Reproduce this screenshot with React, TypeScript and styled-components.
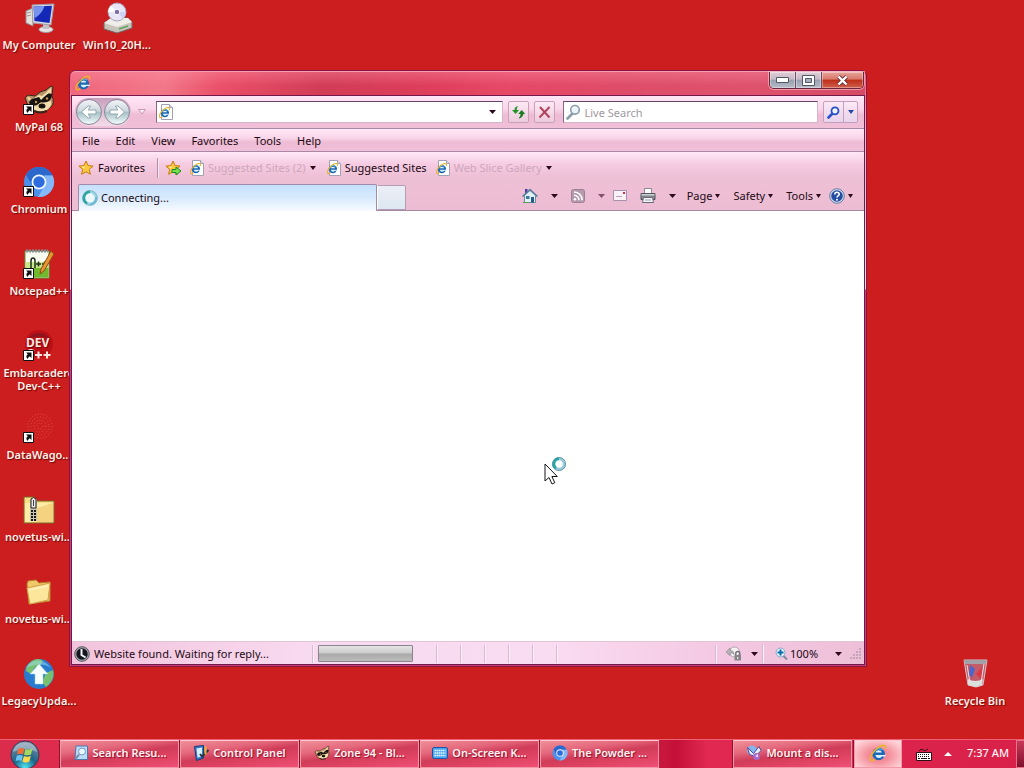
import { FC, ReactNode } from 'react';
import styled, { createGlobalStyle, css } from 'styled-components';

const GlobalStyle = createGlobalStyle`
  * {
    box-sizing: border-box;
  }

  body {
    margin: 0;
    font-family: 'Noto Sans', 'Open Sans', sans-serif;
    font-size: 11px;
    line-height: 14px;
    color: #1c0a14;
  }

  button, input {
    font: inherit;
    color: inherit;
  }

  button {
    margin: 0;
    padding: 0;
    border: 0;
    background: none;
  }

  svg {
    display: block;
    flex: none;
  }
`;

const Screen = styled.div`
  display: flex;
  flex-direction: column;
  min-height: 100vh;
  overflow: hidden;
  background: #cc1e1e;
`;

/* desktop */

const Desktop = styled.main`
  position: relative;
  flex: 1;
  display: flex;
  justify-content: space-between;
`;

const Shortcuts = styled.div`
  display: grid;
  grid-template-rows: repeat(9, 82px);
  grid-auto-columns: 78px;
  grid-auto-flow: column;
`;

const BinArea = styled.div`
  display: flex;
  align-items: flex-end;
  width: 98px;
  padding-bottom: 1px;
`;

const ShortcutButton = styled.button`
  display: flex;
  flex-direction: column;
  align-items: center;
  gap: 4px;
  width: 100%;
  height: 82px;
  padding-top: 2px;
  font-weight: 600;
  line-height: 13px;
  color: #fff0ea;
  text-shadow: 1px 1px 1px rgba(90, 0, 0, 0.8);
  white-space: pre;
`;

/* browser window */

const WindowFrame = styled.section`
  position: absolute;
  top: 70px;
  right: 157px;
  bottom: 72px;
  left: 69px;
  display: flex;
  flex-direction: column;
  padding: 0 1px 1px;
  border: 1px solid #8c1440;
  border-radius: 6px 6px 0 0;
  background: linear-gradient(#e8567a 0, #f4b8d0 60px, #fbe0ee 218px, #c0447c 219px);
`;

const TitleBar = styled.header`
  display: flex;
  justify-content: space-between;
  height: 24px;
  padding-left: 4px;
  border-radius: 5px 5px 0 0;
  border-top: 1px solid #f4a0b0;
  background:
    linear-gradient(rgba(255, 150, 170, 0.35), rgba(255, 120, 150, 0) 60%),
    linear-gradient(100deg, #f0667c 0, #f27888 12%, #ea5068 19%, #d23c56 32%, #de3e5a 45%, #e64866 55%, #de4c68 70%, #de526e 86%, #d44a64 100%);
`;

const TitleIcon = styled.span`
  padding-top: 3px;
`;

const Caption = styled.div`
  display: flex;
  height: 17px;
  margin-right: 1px;
  border: 1px solid #6c2438;
  border-top: 0;
  border-radius: 0 0 5px 5px;
  overflow: hidden;
  box-shadow: 0 0 0 1px rgba(255, 200, 210, 0.6);
`;

const CaptionButton = styled.button<{ $close?: boolean }>`
  display: flex;
  align-items: center;
  justify-content: center;
  width: ${({ $close }) => ($close ? '41px' : '26px')};
  border-right: ${({ $close }) => ($close ? '0' : '1px solid #6c4c60')};
  background: ${({ $close }) =>
    $close
      ? 'linear-gradient(#e8a49a 0, #d8786a 45%, #bc2e18 50%, #d0604c 100%)'
      : 'linear-gradient(#e0ccd6 0, #c8b8c6 45%, #98a0b0 50%, #b8bcc8 100%)'};
  box-shadow: inset 0 0 0 1px rgba(255, 255, 255, 0.35);
`;

const WindowBody = styled.div`
  display: flex;
  flex: 1;
  flex-direction: column;
  border: 1px solid #74184c;
  background: #fff;
`;

const pinkBar = css`
  background: linear-gradient(#ffe6f6 0, #fad6ea 40%, #eebcd4 60%, #f0c0d8 100%);
`;

const NavBar = styled.div`
  display: flex;
  align-items: center;
  height: 33px;
  padding: 0 6px 0 3px;
  border-bottom: 1px solid #a888a4;
  ${pinkBar}
`;

const TravelButtons = styled.div`
  display: flex;
  gap: 2px;
  padding: 1px;
  margin-right: 4px;
  border-radius: 14px;
  background: linear-gradient(#c8a0bc, #f4dcea);
`;

const RoundButton = styled.button`
  display: flex;
  align-items: center;
  justify-content: center;
  width: 26px;
  height: 26px;
  border: 1px solid #8c8498;
  border-radius: 50%;
  background: linear-gradient(#f4f4f8 0, #ccd8de 45%, #a8c0c6 52%, #f0fcfc 100%);
`;

const ArrowButton = styled.button`
  display: flex;
  align-items: center;
  justify-content: center;
  width: 14px;
  height: 18px;
`;

const Field = styled.div`
  display: flex;
  align-items: center;
  height: 22px;
  padding: 0 2px;
  border: 1px solid #d8b4cc;
  border-top-color: #644468;
  border-left-color: #846884;
  background: #fff;
`;

const AddressField = styled(Field)`
  flex: 348;
  margin-left: 7px;
`;

const SearchField = styled(Field)`
  flex: 255;
  margin: 0 5px 0 8px;
`;

const TextInput = styled.input`
  flex: 1;
  min-width: 0;
  height: 18px;
  padding: 0 4px;
  border: 0;
  outline: 0;
  background: none;

  &::placeholder {
    color: #a098a0;
    opacity: 1;
  }
`;

const SquareButton = styled.button`
  display: flex;
  align-items: center;
  justify-content: center;
  width: 21px;
  height: 22px;
  margin-left: 5px;
  border: 1px solid #c8a0bc;
  border-radius: 2px;
  background: linear-gradient(#fdeaf4 0, #f6dae8 50%, #eccadc 100%);
`;

const SearchSplit = styled.div`
  display: flex;
  height: 22px;
  border: 1px solid #c4a0c0;
  border-radius: 2px;
  background: linear-gradient(#fdeaf6 0, #f2dcee 50%, #e8d4ec 100%);

  button {
    display: flex;
    align-items: center;
    justify-content: center;
    width: 13px;
  }

  button:first-child {
    width: 20px;
    border-right: 1px solid #c4a0c0;
  }
`;

const MenuBar = styled.nav`
  display: flex;
  height: 23px;
  padding: 2px 2px 0;
  border-bottom: 1px solid #a888a4;
  ${pinkBar}
`;

const MenuItem = styled.button`
  padding: 0 8px;
`;

const Toolbars = styled.div`
  background: linear-gradient(#ffe8f8 0, #f6cce2 12px, #eec0d6 24px, #ecbcd2 100%);
`;

const FavoritesBar = styled.div`
  display: flex;
  align-items: center;
  height: 32px;
  padding-left: 6px;
`;

const FavoriteLink = styled.button<{ $faded?: boolean }>`
  display: flex;
  align-items: center;
  gap: 4px;
  margin-right: 9px;
  white-space: nowrap;
  color: ${({ $faded }) => ($faded ? '#cda6bc' : 'inherit')};
`;

const FavoritesButton = styled(FavoriteLink)`
  margin-right: 12px;
`;

const FavoritesDivider = styled.span`
  width: 1px;
  height: 20px;
  margin-right: 7px;
  background: #b48ca8;
  box-shadow: 1px 0 0 #ffe8f4;
`;

const SiteLink = styled(FavoriteLink)`
  margin-right: 11px;
`;

const TabRow = styled.div`
  display: flex;
  align-items: flex-end;
  height: 27px;
  padding-left: 6px;
  border-bottom: 1px solid #a888a4;
`;

const Tab = styled.button`
  display: flex;
  align-items: center;
  gap: 3px;
  width: 299px;
  height: 27px;
  margin-bottom: -1px;
  padding: 0 3px;
  border: 1px solid #a08ca8;
  border-bottom: 0;
  border-radius: 2px 2px 0 0;
  background: linear-gradient(#c4e0fc 0, #d8eafc 50%, #f6fbff 100%);
`;

const NewTab = styled.button`
  width: 29px;
  height: 25px;
  border: 1px solid #b49cb4;
  border-left-color: #ffffff;
  border-radius: 0 2px 0 0;
  background: linear-gradient(#eceef6, #dce8f2);
`;

const CommandBar = styled.div`
  display: flex;
  align-items: center;
  height: 27px;
  margin-left: auto;
  padding: 0 11px 2px 0;
`;

const Command = styled.button<{ $gap?: number }>`
  display: flex;
  align-items: center;
  gap: 3px;
  margin-left: ${({ $gap = 13 }) => $gap}px;
`;

const Page = styled.div`
  flex: 1;
  background: #fff;
`;

const StatusBar = styled.footer`
  display: flex;
  align-items: center;
  height: 23px;
  padding: 1px 0 0 2px;
  border-top: 1px solid #e0c4d8;
  background: linear-gradient(90deg, #f2c4dc 0, #f8daf0 30%, #fadcf2 60%, #f4c8e2 82%, #eec0d8 100%);
`;

const StatusText = styled.span`
  width: 222px;
  padding-left: 4px;
  white-space: nowrap;
`;

const Pane = styled.span<{ $width: number }>`
  display: flex;
  align-items: center;
  justify-content: space-between;
  width: ${({ $width }) => $width}px;
  height: 18px;
  border-left: 1px solid #dcb8d0;
  box-shadow: inset 1px 0 0 #fff0fa;
`;

const ProgressPane = styled(Pane)`
  padding-left: 5px;
`;

const SecurityPane = styled(Pane)`
  margin-left: auto;
  padding: 0 4px 0 10px;
`;

const ZoomPane = styled(Pane)`
  padding: 0 2px 0 12px;
`;

const ZoomButton = styled.button`
  display: flex;
  align-items: center;
  gap: 2px;
  margin-right: 8px;
`;

const Progress = styled.div`
  width: 95px;
  height: 17px;
  border: 1px solid #8c848c;
  border-radius: 1px;
  background: linear-gradient(#e4e4e4 0, #cccccc 48%, #a8a8a8 52%, #bcbcbc 100%);
`;

const Pointer = styled.div`
  position: absolute;
  top: 456px;
  left: 544px;
`;

/* taskbar */

const Taskbar = styled.footer`
  display: flex;
  height: 29px;
  border-top: 1px solid #f06078;
  background: linear-gradient(90deg, #dc2c4c 0, #e02c50 30%, #d02444 62%, #c41038 66%, #e02850 69%, #d82048 100%);
`;

const StartButton = styled.button`
  display: flex;
  justify-content: center;
  width: 50px;
  margin-right: 10px;
`;

const TaskButton = styled.button<{ $active?: boolean }>`
  display: flex;
  align-items: center;
  justify-content: center;
  gap: 4px;
  width: ${({ $active }) => ($active ? '48px' : '119px')};
  margin-right: 1px;
  padding-bottom: 2px;
  border: 1px solid #f498a8;
  border-top-color: #ffc8d0;
  font-weight: 600;
  color: #fff4f4;
  white-space: nowrap;
  text-shadow: 1px 1px 1px #90102c;
  box-shadow: -1px 0 0 #901030;
  background: ${({ $active }) =>
    $active
      ? 'radial-gradient(ellipse at 50% 55%, #f07890 0, #f4909c 35%, #ffd8dc 90%)'
      : 'linear-gradient(172deg, #f09098 0, #e4687c 30%, #d03c58 50%, #e24464 75%, #ee5078 100%)'};
`;

const Tray = styled.div`
  display: flex;
  align-items: center;
  margin-left: auto;
`;

const TrayTaskButton = styled(TaskButton)`
  align-self: stretch;
  margin-right: 2px;
`;

const TrayButton = styled.button`
  display: flex;
  align-items: center;
  height: 28px;
  margin-left: 12px;
`;

const Clock = styled.time`
  width: 41px;
  margin: 0 8px 0 15px;
  padding-bottom: 2px;
  color: #fff4f4;
  font-weight: 500;
  white-space: nowrap;
`;

const ShowDesktop = styled.button`
  align-self: stretch;
  width: 8px;
  border: 1px solid #e87088;
  border-right: 0;
  background: linear-gradient(#c83858, #80102c);
`;

/* drawings */

const Caret: FC<{ color?: string; width?: number }> = ({ color = '#2c0a1c', width = 7 }) => (
  <svg width={width} height="4" viewBox="0 0 8 4" preserveAspectRatio="none">
    <path d="M0 0h8L4 4z" fill={color} />
  </svg>
);

const IeMark: FC = () => (
  <g>
    <circle cx="8.500" cy="8.800" r="5.600" fill="#1c68b4" />
    <path d="M5.700 7.500a2.900 2.400 0 0 1 5.700 0z" fill="#dcf2fc" />
    <path d="M5.700 9.800h9v1.200h-3.200q-1 1.400-2.900 1.400-2.300 0-2.900-2.600z" fill="#dcf2fc" />
    <path d="M4 7.500a5 5 0 0 1 8-2.200" fill="none" stroke="#58bce8" />
    <path
      d="M14.500 4.500C15.500 1 12.500.2 8.400 3 4 6 .2 11.500 1.200 14c.6 1.400 2.600.6 4-.4"
      fill="none"
      stroke="#e8b42c"
      strokeWidth="1.500"
    />
  </g>
);

const IeIcon: FC<{ size?: number }> = ({ size = 16 }) => (
  <svg width={size} height={size} viewBox="0 0 16 16">
    <IeMark />
  </svg>
);

const IePageIcon: FC = () => (
  <svg width="14" height="16" viewBox="0 0 14 16">
    <path d="M2.500.5h8l3 3v12h-11z" fill="#fff" stroke="#a4a0b4" />
    <path d="M10.500.5v3h3" fill="#e0e0ec" stroke="#a4a0b4" />
    <g transform="translate(-.5 2.500) scale(.75)">
      <IeMark />
    </g>
  </svg>
);

const Star: FC<{ add?: boolean }> = ({ add }) => (
  <svg width="16" height="16" viewBox="0 0 16 16">
    <path
      d="M8 1l2.100 4.600 5 .5-3.800 3.300 1.100 4.900L8 11.800l-4.400 2.500 1.100-4.900L.9 6.100l5-.5z"
      fill="#fcc840"
      stroke="#c47c14"
    />
    <path d="M8 3L6.700 6.400l-3 .4 2.300 2" fill="#fff2a8" />
    {add && <path d="M7 9.500h4v-2.500l5 4-5 4v-2.500H7z" fill="#78e050" stroke="#168c24" />}
  </svg>
);

const Spinner: FC = () => (
  <svg width="16" height="16" viewBox="0 0 16 16">
    <circle cx="8" cy="8" r="6.200" fill="#eef8fc" stroke="#9cd4e4" strokeWidth="3" />
    <path d="M8 1.800A6.200 6.200 0 0 0 5 13.400" fill="none" stroke="#24a49c" strokeWidth="2.500" />
    <path d="M8 14.200a6.200 6.200 0 0 0 6-7" fill="none" stroke="#60b8d8" strokeWidth="1.500" />
    <circle cx="8" cy="8" r="7.300" fill="none" stroke="#6ca4b4" strokeWidth=".6" />
  </svg>
);

const TravelArrow: FC<{ forward?: boolean }> = ({ forward }) => (
  <svg width="18" height="16" viewBox="0 0 18 16">
    <path
      d="M1.500 8L8 2h2.500L8.200 6H16v4H8.200l2.300 4H8z"
      fill="#fff"
      stroke="#90a8b0"
      transform={forward ? 'rotate(180 9 8)' : undefined}
    />
  </svg>
);

const RefreshIcon: FC = () => (
  <svg width="15" height="14" viewBox="0 0 15 14">
    <path d="M7 1C4.500 1.500 3.500 3 3.500 5H1l3.600 4L8 5H5.800c0-1.500.2-2.600 1.200-4z" fill="#249428" />
    <path d="M8 13c2.500-.5 3.800-2 3.800-4" fill="none" stroke="#187c20" strokeWidth="1" />
    <path d="M8 13c2.500-.5 4-2 4-4h2.200L10.700 5 7.200 9h2.300c0 1.500-.3 2.800-1.500 4z" fill="#187c20" />
  </svg>
);

const StopIcon: FC = () => (
  <svg width="13" height="13" viewBox="0 0 13 13">
    <path d="M2 1l9.500 10.500M11.500 1L1.500 11.500" stroke="#b04460" strokeWidth="2" />
  </svg>
);

const Lens: FC<{ color: string; glass?: string }> = ({ color, glass = '#eaf4fa' }) => (
  <svg width="15" height="16" viewBox="0 0 15 16">
    <path d="M6.500 9.500L1.500 14.500" stroke={color} strokeWidth="2.600" strokeLinecap="round" />
    <circle cx="9" cy="5.800" r="4.300" fill={glass} stroke={color} strokeWidth="1.600" />
    <path d="M6.800 5.200a2.400 2.400 0 0 1 2.600-2" fill="none" stroke="#fff" />
  </svg>
);

const SearchLens: FC = () => (
  <svg width="13" height="13" viewBox="0 0 13 13">
    <path d="M5.500 7.500L1.500 11.500" stroke="#2850c8" strokeWidth="2.600" strokeLinecap="round" />
    <circle cx="8" cy="4.800" r="3.500" fill="#f0f4fc" stroke="#2850c8" strokeWidth="1.800" />
  </svg>
);

const HomeIcon: FC = () => (
  <svg width="16" height="16" viewBox="0 0 16 16">
    <path d="M3 1h2.500v4H3z" fill="#5038a4" />
    <path d="M2.500 7.500L8 2.500l5.500 5v7h-11z" fill="#e0f0f6" stroke="#6c8ca4" />
    <path d="M.5 8.500L8 1.500l7.500 7" fill="none" stroke="#587c9c" strokeWidth="1.500" />
    <path d="M9 9h3v5.500H9z" fill="#245c84" />
    <path d="M4 8h3.500v3H4z" fill="#407898" />
    <path d="M1 14.500h6" stroke="#50a050" />
  </svg>
);

const FeedIcon: FC = () => (
  <svg width="14" height="14" viewBox="0 0 14 14">
    <rect x=".5" y=".5" width="13" height="13" rx="2" fill="#b49aac" stroke="#9c8094" />
    <circle cx="4" cy="10.200" r="1.300" fill="#fff" />
    <path d="M3 6.200a5 5 0 0 1 5 5M3 3a8.200 8.200 0 0 1 8.200 8.200" fill="none" stroke="#fff" strokeWidth="1.500" />
  </svg>
);

const MailIcon: FC = () => (
  <svg width="14" height="11" viewBox="0 0 14 11">
    <path d="M.5.5h13v10H.5z" fill="#fbf2f8" stroke="#a890ac" />
    <path d="M10 2h2v2h-2z" fill="#c83048" />
    <path d="M3 6.500h6" stroke="#b4a4b8" />
  </svg>
);

const PrinterIcon: FC = () => (
  <svg width="16" height="15" viewBox="0 0 16 15">
    <path d="M4.500.5h7v6h-7z" fill="#fff" stroke="#888894" />
    <path d="M1 5.500h14v6H1z" fill="#84888c" stroke="#50545c" />
    <path d="M1.500 6h13v1.500h-13z" fill="#c8d0d0" />
    <path d="M3.500 9.500h9l1 5h-11z" fill="#f4f4f8" stroke="#686c78" />
    <path d="M5 12h6" stroke="#a4a4b0" />
  </svg>
);

const HelpIcon: FC = () => (
  <svg width="16" height="16" viewBox="0 0 16 16">
    <circle cx="8" cy="8" r="7.300" fill="#d4dcec" stroke="#687ca4" />
    <circle cx="8" cy="8" r="5.800" fill="#244ea4" />
    <path d="M5.800 6.400C5.800 3.600 10.300 3.700 10.300 6.200 10.300 7.700 8 7.700 8 9.600" fill="none" stroke="#fff" strokeWidth="1.600" />
    <circle cx="8" cy="11.800" r="1" fill="#fff" />
  </svg>
);

const WaitIcon: FC = () => (
  <svg width="16" height="16" viewBox="0 0 16 16">
    <circle cx="8" cy="8" r="7.300" fill="#a4a4ac" stroke="#58585f" />
    <circle cx="8" cy="8" r="5.700" fill="#16161e" />
    <path d="M7.500 3v6l4 2.500" fill="none" stroke="#f4f4f8" strokeWidth="2" />
  </svg>
);

const ProtectedIcon: FC = () => (
  <svg width="16" height="15" viewBox="0 0 16 15">
    <circle cx="8.500" cy="6" r="5" fill="#f6f2f4" stroke="#b0a4ac" />
    <path d="M0 6l4-4v2.500c3 0 4 1.500 4 4C7 7 6 7 4 7v2.500z" fill="#b8b4b8" stroke="#908890" strokeWidth=".7" />
    <path d="M9.800 9V7.500a2 2 0 0 1 4 0V9" fill="none" stroke="#706c74" strokeWidth="1.400" />
    <path d="M8.500 9h6.500v5.500H8.500z" fill="#86848a" />
    <path d="M11.200 11h1v2h-1z" fill="#f4f0f4" />
  </svg>
);

const ZoomIcon: FC = () => (
  <svg width="13" height="14" viewBox="0 0 13 14">
    <path d="M8 8.500l4 4" stroke="#7c889c" strokeWidth="2" />
    <circle cx="5.500" cy="5.500" r="4.500" fill="#e4f4fc" stroke="#84a4c4" />
    <path d="M5.500 2.500v6M2.500 5.500h6" stroke="#0c6cac" strokeWidth="2" />
  </svg>
);

const Grip: FC = () => (
  <svg width="12" height="12" viewBox="0 0 12 12">
    <path
      d="M9 0h2v2H9zM6 3h2v2H6zM9 3h2v2H9zM3 6h2v2H3zM6 6h2v2H6zM9 6h2v2H9zM0 9h2v2H0zM3 9h2v2H3zM6 9h2v2H6zM9 9h2v2H9z"
      fill="#c4a4bc"
    />
  </svg>
);

const PointerIcon: FC = () => (
  <svg width="24" height="30" viewBox="0 0 24 30">
    <path d="M1 8v17l4-3.500 3 6.500 2.800-1.300-2.900-6.200h5.400z" fill="#fff" stroke="#141418" />
    <circle cx="15" cy="8" r="5.300" fill="none" stroke="#98c8d8" strokeWidth="3" />
    <path d="M15 2.700A5.300 5.300 0 0 0 12 12.300" fill="none" stroke="#28a8a4" strokeWidth="2.600" />
    <circle cx="15" cy="8" r="6.600" fill="none" stroke="#4c8498" strokeWidth=".7" />
  </svg>
);

const LinkBadge: FC = () => (
  <g>
    <path d="M.5 20.500h10v10H.5z" fill="#fff" stroke="#101010" />
    <path d="M3 22.500h5.500V28L6.700 26.200C5.500 27 5 28 4.800 29 2.800 27.500 3 25.700 4.800 24.300z" fill="#101010" />
  </g>
);

const Picture: FC<{ size?: number; linked?: boolean; children: ReactNode }> = ({ size = 32, linked, children }) => (
  <svg width={size} height={size} viewBox="0 0 32 32">
    {children}
    {linked && <LinkBadge />}
  </svg>
);

const computerArt = (
  <g>
    <path d="M3 9l7-3v18l-7-3z" fill="#e4e0dc" stroke="#948c8c" />
    <path d="M4 11l4-1M4 14l4-1" stroke="#a09898" />
    <ellipse cx="23" cy="27.500" rx="7" ry="3" fill="#e8e4e4" stroke="#a09ca4" />
    <path d="M20 21h6v6h-6z" fill="#c4c0c8" />
    <path d="M9 3l22-1-3 21-18-2z" fill="#d8d8e0" stroke="#a09ca8" />
    <path d="M10.500 4.500l18.500-.8L26.500 21 11.500 19z" fill="#1428b8" />
    <path d="M10.500 4.500l11-.5c-2 6-6 10-10 12z" fill="#7894ec" />
  </g>
);

const driveArt = (
  <g>
    <path d="M3 21l7-5h17l4 4v6L16 31 3 27z" fill="#c8c4bc" stroke="#706868" />
    <path d="M3 21l13 4 15-5-4-4H10z" fill="#f0eee8" />
    <path d="M18 27l9-3" stroke="#60a460" strokeWidth="1.500" />
    <circle cx="16" cy="10" r="9" fill="#e8e6f6" stroke="#a8a4bc" />
    <path d="M16 10L10 3.500A9 9 0 0 0 7 10z" fill="#fff" />
    <path d="M16 10l6 6.500A9 9 0 0 0 25 10z" fill="#ccd0f4" />
    <circle cx="16" cy="10" r="2.800" fill="#7c6ca8" stroke="#fff" />
  </g>
);

const raccoonArt = (
  <g>
    <path d="M2 14l3-3 7 1q5-5 11-6l5-4 2 1-1 9q3 7-1 11-5 5-12 5-9 0-12-9z" fill="#b89468" stroke="#38241c" />
    <path d="M24 7l4-3v6zM4 13l4 1-2 3z" fill="#f4d8a8" />
    <path d="M6 18q6-7 13-5 5-5 10-3 0 6-5 8-3 1-6 0-5 5-11 3z" fill="#181414" />
    <path d="M9 15l7-4 3 1 6-5 2 1-6 5-3 3-2-3z" fill="#f2dfae" />
    <path d="M8 23q5 0 9-4 5 0 11-2 1 6-4 9-9 4-16-3z" fill="#f2dfae" />
    <ellipse cx="19" cy="22" rx="3.500" ry="2.500" fill="#181414" />
    <circle cx="13" cy="18" r="1.200" fill="#c89858" />
    <circle cx="24" cy="14.500" r="1.200" fill="#c89858" />
    <path d="M11 27q6 3 13 0" fill="none" stroke="#38241c" strokeWidth="2" />
  </g>
);

const chromiumArt = (
  <g>
    <circle cx="16" cy="16" r="15" fill="#4c90ec" />
    <path d="M16 1a15 15 0 0 1 13.600 8.500H16L9.600 20 3 9A15 15 0 0 1 16 1z" fill="#2c68cc" />
    <path d="M29.600 9.500A15 15 0 0 1 15 31l7-12c2-3 1-7-1-9.500z" fill="#84b8f8" />
    <circle cx="16" cy="16" r="7.500" fill="#f0f6ff" />
    <circle cx="16" cy="16" r="5.700" fill="#2c6cdc" />
  </g>
);

const notepadArt = (
  <g>
    <path d="M2 3h24v27H2z" fill="#f8fcf0" stroke="#609040" />
    <path d="M2.500 19h23v10.500h-23z" fill="#70b82c" />
    <path d="M2.500 14h23v6h-23z" fill="#c8e888" />
    <path d="M3 3h22" stroke="#8c8c98" strokeWidth="3" strokeDasharray="2 1" />
    <path d="M8 20V13q0-3 2-3t2 3v7M13 16h5m-2.500-2.500v5M19 16h5m-2.500-2.500v5" fill="none" stroke="#202c20" strokeWidth="1.500" />
    <path d="M28 3l3 3-10 17-4 3 1-5z" fill="#e89430" stroke="#8c4c18" />
  </g>
);

const devArt = (
  <g>
    <circle cx="16" cy="14" r="14" fill="#bc1018" />
    <path d="M5 9a13 13 0 0 1 22 0q-11-5-22 0z" fill="#8c141c" />
    <text x="3" y="17" fill="#ffe8e0" fontFamily="'Noto Sans', sans-serif" fontSize="12" fontWeight="700">
      DEV
    </text>
    <path
      d="M11 21q-7-3-7 4M12 25h7m-3.500-3.500v7M20.500 25h7M24 21.500v7"
      fill="none"
      stroke="#ffe8e0"
      strokeWidth="2"
    />
  </g>
);

const wagonArt = (
  <g fill="none" stroke="#e45450" strokeWidth="1" strokeDasharray="1 2">
    <circle cx="17" cy="14" r="12" />
    <circle cx="17" cy="14" r="9" />
    <circle cx="17" cy="14" r="6" />
    <circle cx="17" cy="14" r="3" />
  </g>
);

const zipArt = (
  <g>
    <path d="M1 3h10l3 4h17v22H1z" fill="#f6dc84" stroke="#7c6428" />
    <path d="M2 9h28v19H2z" fill="#fbeca8" />
    <path d="M14 14L30 9v19H14z" fill="#f4d280" />
    <path d="M7 5h7v22H7z" fill="#c8c4b0" />
    <path d="M8 17h5M8 20h5M8 23h5M8 26h5" stroke="#181818" strokeWidth="1.800" strokeDasharray="2 1" />
    <path d="M8 5q2.500-3 5 0v9H8z" fill="#e8e8e8" stroke="#202020" />
    <path d="M10.500 6v6" stroke="#404040" />
  </g>
);

const folderArt = (
  <g>
    <path d="M4 8l1-3 8-1 3 3 11-1v19L6 28z" fill="#f0c868" stroke="#b88030" />
    <path d="M4 12l23-5-2 17L7 28z" fill="#fce69c" stroke="#d0a048" />
    <path d="M6 14l19-4" stroke="#fff8d0" />
  </g>
);

const updateArt = (
  <g>
    <circle cx="16" cy="16" r="15" fill="#287cd0" />
    <path d="M9 3c5-3 9-2 11 0l-3 5-5 1-4 7-5-3c0-4 3-8 6-10zM23 15l7-3c2 8-2 13-7 17l-4-5z" fill="#78c070" />
    <path d="M3 10c4-8 16-12 25 0-8-5-17-4-25 0z" fill="#a0dcf4" opacity=".5" />
    <path d="M16 6l9 10h-5v10h-8V16H7z" fill="#f6feff" stroke="#9cd0e0" strokeWidth=".5" />
  </g>
);

const binArt = (
  <g>
    <path d="M5 2h23l-4 25-7 2-8-2z" fill="#c45c68" stroke="#d4c8d0" />
    <path d="M5 2h23l-1 4H6z" fill="#a4a0a8" />
    <path d="M11 7l5 4-3 9-3-4z" fill="#4c64cc" />
    <path d="M23 9l-6 7 5 5z" fill="#dc3848" />
    <path d="M9 21q7 4 15 0l-1 6-6 2-8-2z" fill="#dce0dc" />
    <path d="M8 7l3 18M25 6l-3 19" stroke="#f4dce0" />
  </g>
);

const searchTaskArt = (
  <g>
    <path d="M6 2h23v27H4z" fill="#bcdcf8" stroke="#4c78ac" strokeWidth="2" />
    <circle cx="18" cy="13" r="7" fill="#e8f6ff" stroke="#7498c0" strokeWidth="2" />
    <path d="M12 19l-6 8" stroke="#7088a8" strokeWidth="4" />
  </g>
);

const controlArt = (
  <g>
    <path d="M3 3l18-2v25l-14 5z" fill="#3c78c8" stroke="#183c78" strokeWidth="2" />
    <path d="M7 7l11-2v18L9 25z" fill="#d4f0fc" />
    <path d="M14 18l4 5L31 10" fill="none" stroke="#243448" strokeWidth="4" />
    <path d="M25 3v16" stroke="#e4b434" strokeWidth="4" />
  </g>
);

const keyboardTaskArt = (
  <g>
    <rect x="1" y="5" width="30" height="22" rx="3" fill="#4ca4f0" stroke="#1c58a4" strokeWidth="2" />
    <path d="M5 11h22M5 16h22M5 21h22" stroke="#e0f6ff" strokeWidth="3" strokeDasharray="3 1" />
  </g>
);

const mountArt = (
  <g>
    <circle cx="12" cy="11" r="10" fill="#88b4ec" />
    <path d="M3 5l12 12L26 3l4 8-11 12-12-4z" fill="#e4ecfc" stroke="#504ca4" strokeWidth="2" />
    <circle cx="21" cy="23" r="7" fill="#a468c8" />
    <path d="M18 22l6-4v7z" fill="#f4d4fc" />
  </g>
);

const StartOrb: FC = () => (
  <svg width="30" height="28" viewBox="0 0 30 28">
    <defs>
      <radialGradient id="orb" cx=".5" cy=".95" r=".9">
        <stop offset="0" stopColor="#50e8f4" />
        <stop offset=".45" stopColor="#1c6488" />
        <stop offset="1" stopColor="#7890a8" />
      </radialGradient>
    </defs>
    <circle cx="15" cy="15" r="14" fill="url(#orb)" stroke="#3c3450" />
    <path d="M3 12C5-1 25-1 27 12q-12-6-24 0z" fill="#fff" opacity=".35" />
    <path d="M8 9q3-2 6.500-.3L13 14.500Q10 13 7 14.500z" fill="#f06c38" />
    <path d="M15.500 9q3.500 1.500 7-.5L21 14.500q-3 1.500-7 .3z" fill="#a4d860" />
    <path d="M6.700 15.700q3-1.600 6.200 0L11.500 21q-3-1.500-6 .2z" fill="#68c4f4" />
    <path d="M13.900 16q3.500 1.500 7-.2L19.300 21.500q-3.300 1.800-6.900 0z" fill="#fcd848" />
  </svg>
);

const TrayKeyboard: FC = () => (
  <svg width="16" height="13" viewBox="0 0 16 13">
    <path d="M3 3q2-3 4-1t5-1" fill="none" stroke="#301018" />
    <path d="M.5 4.500h15v8H.5z" fill="#fff" stroke="#301018" />
    <path d="M2 6.500h12M2 8.500h12" stroke="#201014" strokeDasharray="1 1" />
    <path d="M2 10.500h2m1 0h6m1 0h2" stroke="#201014" />
  </svg>
);

interface ShortcutItem {
  name: string;
  art: ReactNode;
  linked?: boolean;
}

const shortcuts: ShortcutItem[] = [
  { name: 'My Computer', art: computerArt },
  { name: 'MyPal 68', art: raccoonArt, linked: true },
  { name: 'Chromium', art: chromiumArt, linked: true },
  { name: 'Notepad++', art: notepadArt, linked: true },
  { name: 'Embarcadero\nDev-C++', art: devArt, linked: true },
  { name: 'DataWago...', art: wagonArt, linked: true },
  { name: 'novetus-wi...', art: zipArt },
  { name: 'novetus-wi...', art: folderArt },
  { name: 'LegacyUpda...', art: updateArt },
  { name: 'Win10_20H...', art: driveArt },
];

const tasks = [
  { name: 'Search Resu...', art: searchTaskArt },
  { name: 'Control Panel', art: controlArt },
  { name: 'Zone 94 - Bl...', art: raccoonArt },
  { name: 'On-Screen K...', art: keyboardTaskArt },
  { name: 'The Powder ...', art: chromiumArt },
];

const menus = ['File', 'Edit', 'View', 'Favorites', 'Tools', 'Help'];

const Shortcut: FC<ShortcutItem> = ({ name, art, linked }) => (
  <ShortcutButton>
    <Picture linked={linked}>{art}</Picture>
    {name}
  </ShortcutButton>
);

const Browser: FC = () => (
  <WindowFrame>
    <TitleBar>
      <TitleIcon>
        <IeIcon />
      </TitleIcon>
      <Caption>
        <CaptionButton aria-label="Minimize">
          <svg width="13" height="6" viewBox="0 0 13 6">
            <path d="M.5.5h12v5H.5z" fill="#fff" stroke="#505868" />
          </svg>
        </CaptionButton>
        <CaptionButton aria-label="Maximize">
          <svg width="13" height="11" viewBox="0 0 13 11">
            <path d="M.5.5h12v10H.5z" fill="#fff" stroke="#505868" />
            <path d="M3.500 3.500h6v4h-6z" fill="#a8b0bc" stroke="#505868" />
          </svg>
        </CaptionButton>
        <CaptionButton $close aria-label="Close">
          <svg width="13" height="11" viewBox="0 0 13 11">
            <path d="M2.500 1.500l8 8M10.500 1.500l-8 8" stroke="#683038" strokeWidth="4" />
            <path d="M2.500 1.500l8 8M10.500 1.500l-8 8" stroke="#fff" strokeWidth="2.400" />
          </svg>
        </CaptionButton>
      </Caption>
    </TitleBar>
    <WindowBody>
      <NavBar>
        <TravelButtons>
          <RoundButton aria-label="Back">
            <TravelArrow />
          </RoundButton>
          <RoundButton aria-label="Forward">
            <TravelArrow forward />
          </RoundButton>
        </TravelButtons>
        <ArrowButton aria-label="Recent pages">
          <svg width="8" height="6" viewBox="0 0 8 6">
            <path d="M.5.5h7L4 5z" fill="#fce8f4" stroke="#c49cb8" />
          </svg>
        </ArrowButton>
        <AddressField>
          <IePageIcon />
          <TextInput aria-label="Address" />
          <ArrowButton aria-label="Show addresses">
            <Caret />
          </ArrowButton>
        </AddressField>
        <SquareButton aria-label="Refresh">
          <RefreshIcon />
        </SquareButton>
        <SquareButton aria-label="Stop">
          <StopIcon />
        </SquareButton>
        <SearchField>
          <Lens color="#8c9ca8" />
          <TextInput aria-label="Search" placeholder="Live Search" />
        </SearchField>
        <SearchSplit>
          <button aria-label="Search">
            <SearchLens />
          </button>
          <button aria-label="Search options">
            <Caret color="#2848a0" width={6} />
          </button>
        </SearchSplit>
      </NavBar>
      <MenuBar>
        {menus.map((menu) => (
          <MenuItem key={menu}>{menu}</MenuItem>
        ))}
      </MenuBar>
      <Toolbars>
        <FavoritesBar>
          <FavoritesButton>
            <Star />
            Favorites
          </FavoritesButton>
          <FavoritesDivider />
          <FavoriteLink aria-label="Add to Favorites Bar">
            <Star add />
          </FavoriteLink>
          <SiteLink $faded>
            <IePageIcon />
            Suggested Sites (2)
            <Caret width={6} />
          </SiteLink>
          <FavoriteLink>
            <IePageIcon />
            Suggested Sites
          </FavoriteLink>
          <SiteLink $faded>
            <IePageIcon />
            Web Slice Gallery
            <Caret width={6} />
          </SiteLink>
        </FavoritesBar>
        <TabRow>
          <Tab>
            <Spinner />
            Connecting...
          </Tab>
          <NewTab aria-label="New tab" />
          <CommandBar>
            <Command aria-label="Home">
              <HomeIcon />
            </Command>
            <Command aria-label="Home options">
              <Caret />
            </Command>
            <Command aria-label="Feeds">
              <FeedIcon />
            </Command>
            <Command aria-label="Feed options">
              <Caret color="#84506c" />
            </Command>
            <Command $gap={8} aria-label="Read mail">
              <MailIcon />
            </Command>
            <Command aria-label="Print">
              <PrinterIcon />
            </Command>
            <Command aria-label="Print options">
              <Caret />
            </Command>
            <Command $gap={11}>
              Page
              <Caret width={5} />
            </Command>
            <Command>
              Safety
              <Caret width={5} />
            </Command>
            <Command>
              Tools
              <Caret width={5} />
            </Command>
            <Command $gap={8} aria-label="Help">
              <HelpIcon />
              <Caret width={5} />
            </Command>
          </CommandBar>
        </TabRow>
      </Toolbars>
      <Page />
      <StatusBar>
        <WaitIcon />
        <StatusText>Website found. Waiting for reply...</StatusText>
        <ProgressPane $width={124}>
          <Progress role="progressbar" aria-label="Loading" />
        </ProgressPane>
        <Pane $width={24} />
        <Pane $width={24} />
        <Pane $width={24} />
        <Pane $width={24} />
        <Pane $width={24} />
        <Pane $width={24} />
        <SecurityPane $width={47}>
          <ProtectedIcon />
          <Caret />
        </SecurityPane>
        <ZoomPane $width={102}>
          <ZoomButton>
            <ZoomIcon />
            100%
          </ZoomButton>
          <Caret />
          <Grip />
        </ZoomPane>
      </StatusBar>
    </WindowBody>
  </WindowFrame>
);

const App: FC = () => {
  return (
    <Screen>
      <GlobalStyle />
      <Desktop>
        <Shortcuts>
          {shortcuts.map((item, i) => (
            <Shortcut key={i} {...item} />
          ))}
        </Shortcuts>
        <BinArea>
          <Shortcut name="Recycle Bin" art={binArt} />
        </BinArea>
        <Browser />
        <Pointer>
          <PointerIcon />
        </Pointer>
      </Desktop>
      <Taskbar>
        <StartButton aria-label="Start">
          <StartOrb />
        </StartButton>
        {tasks.map(({ name, art }) => (
          <TaskButton key={name}>
            <Picture size={16}>{art}</Picture>
            {name}
          </TaskButton>
        ))}
        <Tray>
          <TrayTaskButton>
            <Picture size={16}>{mountArt}</Picture>
            Mount a dis...
          </TrayTaskButton>
          <TrayTaskButton $active aria-label="Internet Explorer">
            <IeIcon size={18} />
          </TrayTaskButton>
          <TrayButton aria-label="Keyboard">
            <TrayKeyboard />
          </TrayButton>
          <TrayButton aria-label="Show hidden icons">
            <svg width="8" height="4" viewBox="0 0 8 4">
              <path d="M0 4l4-4 4 4z" fill="#fff" />
            </svg>
          </TrayButton>
          <Clock>7:37 AM</Clock>
          <ShowDesktop aria-label="Show desktop" />
        </Tray>
      </Taskbar>
    </Screen>
  );
};

export default App;
